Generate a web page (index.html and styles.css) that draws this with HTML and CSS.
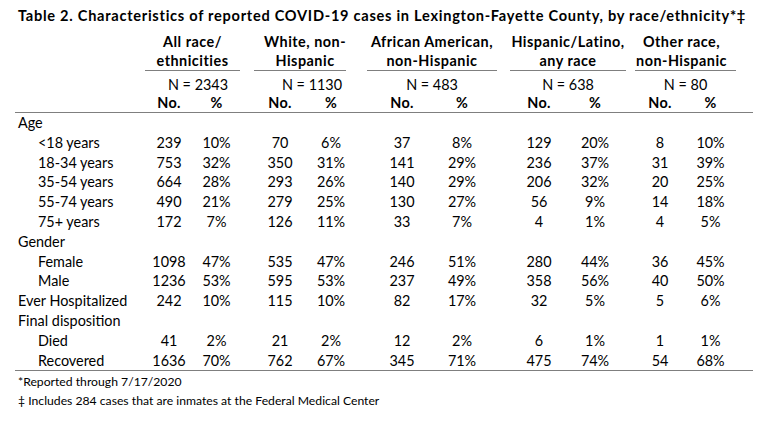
FILE: index.html
```html
<!DOCTYPE html>
<html lang="en">
<head>
<meta charset="utf-8">
<title>Table 2</title>
<link rel="stylesheet" href="styles.css">
</head>
<body>
<div class="page">
  <div class="title">Table 2. Characteristics of reported COVID-19 cases in Lexington-Fayette County, by race/ethnicity*‡</div>
  <table class="data">
    <colgroup>
      <col class="w-label"><col class="w-n1"><col class="w-p1"><col class="w-g1">
      <col class="w-n2"><col class="w-p2"><col class="w-g2">
      <col class="w-n3"><col class="w-p3"><col class="w-g3">
      <col class="w-n4"><col class="w-p4"><col class="w-g4">
      <col class="w-n5"><col class="w-p5"><col class="w-g5">
    </colgroup>
    <thead>
      <tr class="grp">
        <th></th>
        <th colspan="2" class="grp1">All race/<br>ethnicities</th><th class="gap"></th>
        <th colspan="2" class="grp2">White, non-<br>Hispanic</th><th class="gap"></th>
        <th colspan="2">African American,<br>non-Hispanic</th><th class="gap"></th>
        <th colspan="2">Hispanic/Latino,<br>any race</th><th class="gap"></th>
        <th colspan="2" class="grp5">Other race,<br>non-Hispanic</th><th class="gap"></th>
      </tr>
      <tr class="nrow">
        <td></td>
        <td colspan="2" class="n-1">N = 2343</td><td></td>
        <td colspan="2" class="n-2">N = 1130</td><td></td>
        <td colspan="2">N = 483</td><td></td>
        <td colspan="2">N = 638</td><td></td>
        <td colspan="2">N = 80</td><td></td>
      </tr>
      <tr class="sub">
        <th></th>
        <th>No.</th><th class="p1">%</th><th></th>
        <th>No.</th><th class="p2">%</th><th></th>
        <th>No.</th><th class="p3">%</th><th></th>
        <th>No.</th><th class="p4">%</th><th></th>
        <th>No.</th><th class="p5">%</th><th></th>
      </tr>
    </thead>
    <tbody>
      <tr class="first"><td class="lab">Age</td><td></td><td></td><td></td><td></td><td></td><td></td><td></td><td></td><td></td><td></td><td></td><td></td><td></td><td></td><td></td></tr>
      <tr><td class="lab ind">&lt;18 years</td><td>239</td><td class="p1">10%</td><td></td><td>70</td><td class="p2">6%</td><td></td><td>37</td><td class="p3">8%</td><td></td><td>129</td><td class="p4">20%</td><td></td><td>8</td><td class="p5">10%</td><td></td></tr>
      <tr><td class="lab ind">18-34 years</td><td>753</td><td class="p1">32%</td><td></td><td>350</td><td class="p2">31%</td><td></td><td>141</td><td class="p3">29%</td><td></td><td>236</td><td class="p4">37%</td><td></td><td>31</td><td class="p5">39%</td><td></td></tr>
      <tr><td class="lab ind">35-54 years</td><td>664</td><td class="p1">28%</td><td></td><td>293</td><td class="p2">26%</td><td></td><td>140</td><td class="p3">29%</td><td></td><td>206</td><td class="p4">32%</td><td></td><td>20</td><td class="p5">25%</td><td></td></tr>
      <tr><td class="lab ind">55-74 years</td><td>490</td><td class="p1">21%</td><td></td><td>279</td><td class="p2">25%</td><td></td><td>130</td><td class="p3">27%</td><td></td><td>56</td><td class="p4">9%</td><td></td><td>14</td><td class="p5">18%</td><td></td></tr>
      <tr><td class="lab ind">75+ years</td><td>172</td><td class="p1">7%</td><td></td><td>126</td><td class="p2">11%</td><td></td><td>33</td><td class="p3">7%</td><td></td><td>4</td><td class="p4">1%</td><td></td><td>4</td><td class="p5">5%</td><td></td></tr>
      <tr><td class="lab">Gender</td><td></td><td></td><td></td><td></td><td></td><td></td><td></td><td></td><td></td><td></td><td></td><td></td><td></td><td></td><td></td></tr>
      <tr><td class="lab ind">Female</td><td>1098</td><td class="p1">47%</td><td></td><td>535</td><td class="p2">47%</td><td></td><td>246</td><td class="p3">51%</td><td></td><td>280</td><td class="p4">44%</td><td></td><td>36</td><td class="p5">45%</td><td></td></tr>
      <tr><td class="lab ind">Male</td><td>1236</td><td class="p1">53%</td><td></td><td>595</td><td class="p2">53%</td><td></td><td>237</td><td class="p3">49%</td><td></td><td>358</td><td class="p4">56%</td><td></td><td>40</td><td class="p5">50%</td><td></td></tr>
      <tr><td class="lab">Ever Hospitalized</td><td>242</td><td class="p1">10%</td><td></td><td>115</td><td class="p2">10%</td><td></td><td>82</td><td class="p3">17%</td><td></td><td>32</td><td class="p4">5%</td><td></td><td>5</td><td class="p5">6%</td><td></td></tr>
      <tr><td class="lab">Final disposition</td><td></td><td></td><td></td><td></td><td></td><td></td><td></td><td></td><td></td><td></td><td></td><td></td><td></td><td></td><td></td></tr>
      <tr><td class="lab ind">Died</td><td>41</td><td class="p1">2%</td><td></td><td>21</td><td class="p2">2%</td><td></td><td>12</td><td class="p3">2%</td><td></td><td>6</td><td class="p4">1%</td><td></td><td>1</td><td class="p5">1%</td><td></td></tr>
      <tr class="last"><td class="lab ind">Recovered</td><td>1636</td><td class="p1">70%</td><td></td><td>762</td><td class="p2">67%</td><td></td><td>345</td><td class="p3">71%</td><td></td><td>475</td><td class="p4">74%</td><td></td><td>54</td><td class="p5">68%</td><td></td></tr>
    </tbody>
  </table>
  <div class="notes">
    <div class="note">*Reported through 7/17/2020</div>
    <div class="note">‡ Includes 284 cases that are inmates at the Federal Medical Center</div>
  </div>
</div>
</body>
</html>
```

FILE: styles.css
```css
html, body {
  margin: 0;
  padding: 0;
  background: #ffffff;
}

body {
  font-family: Lato, "Liberation Sans", sans-serif;
  font-size: 14.4px;
  color: #000000;
}

.page {
  width: 768px;
  height: 426px;
  padding: 7px 15px 0 15px;
  box-sizing: border-box;
}

.title {
  font-weight: bold;
  font-size: 14.6px;
  letter-spacing: 0.72px;
  line-height: 18px;
  padding-left: 3px;
  white-space: nowrap;
}

.data {
  margin-top: 8px;
  border-collapse: collapse;
  table-layout: fixed;
  width: 738px;
}

.w-label { width: 130px; }
.w-n1 { width: 48px; }
.w-p1 { width: 47px; }
.w-g1 { width: 14px; }
.w-n2 { width: 52px; }
.w-p2 { width: 40px; }
.w-g2 { width: 21px; }
.w-n3 { width: 70px; }
.w-p3 { width: 60px; }
.w-g3 { width: 13px; }
.w-n4 { width: 58px; }
.w-p4 { width: 58px; }
.w-g4 { width: 9px; }
.w-n5 { width: 50px; }
.w-p5 { width: 51px; }
.w-g5 { width: 17px; }

.data th, .data td {
  padding: 0;
  text-align: center;
  white-space: nowrap;
  line-height: 19.8px;
}

.grp th {
  font-weight: bold;
  letter-spacing: 0.5px;
  line-height: 18.5px;
  vertical-align: bottom;
}

.grp th[colspan] {
  border-bottom: 1px solid #7f7f7f;
}

.grp .grp2 { padding-left: 10px; }
.grp .grp5 { padding-right: 8px; }

.nrow td {
  line-height: 18px;
  padding-top: 5px;
}

.nrow .n-1 { padding-left: 11px; }
.nrow .n-2 { padding-left: 24px; }

.sub th {
  font-weight: bold;
  letter-spacing: 0.4px;
  line-height: 17px;
  border-bottom: 1px solid #7f7f7f;
  padding-bottom: 1px;
}

.data .p2 { padding-left: 10px; }
.data .p3 { padding-right: 10px; }
.data .p4 { padding-right: 4px; }

.data td.lab {
  text-align: left;
  padding-left: 3px;
}

.data td.ind {
  padding-left: 23px;
}

.first td { padding-top: 0; }

.last td {
  border-bottom: 1px solid #7f7f7f;
}

.notes {
  padding-left: 3px;
  padding-top: 2px;
  font-size: 12.2px;
}

.note {
  line-height: 18.5px;
  white-space: nowrap;
}
```
